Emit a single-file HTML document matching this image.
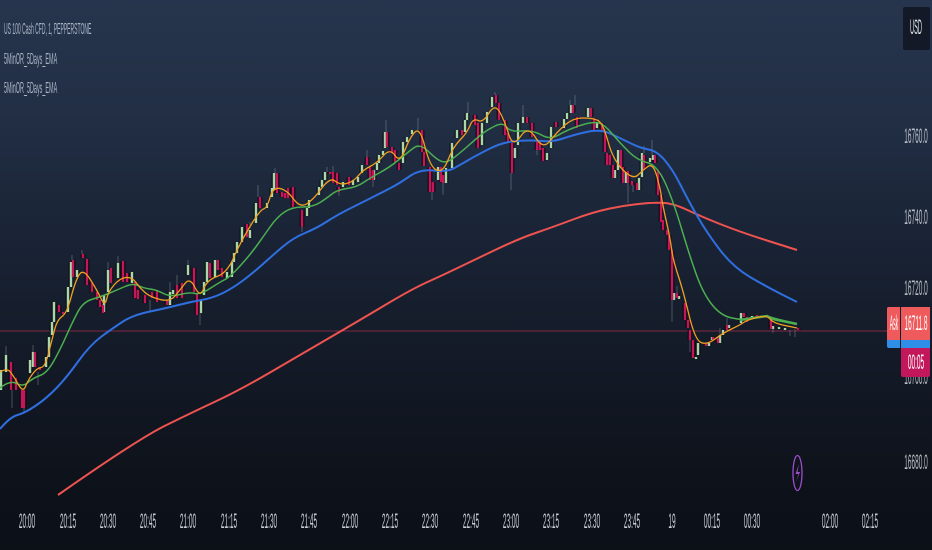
<!DOCTYPE html>
<html><head><meta charset="utf-8"><style>
html,body{margin:0;padding:0;background:#0d1119}
#c{position:relative;width:932px;height:550px;overflow:hidden;background:linear-gradient(#26354d 0,#222f45 20%,#1a2436 42%,#121824 70%,#0d1119 90%,#0c1017 100%);font-family:"Liberation Sans",sans-serif}
svg{position:absolute;left:0;top:0;filter:blur(.3px)}
.t{position:absolute;white-space:nowrap;line-height:20px;height:20px;transform-origin:center center;color:#c9cdd3;filter:blur(.3px)}
.x{font-size:21px;width:100px;text-align:center;transform:scaleX(.31);top:512px}
.y{font-size:21px;width:100px;text-align:center;left:866px;transform:scaleX(.31);color:#b9bec6}
.l{font-size:16px;left:4px;transform-origin:left center;transform:scaleX(.313);color:#aab6c6}
.b{position:absolute}
</style></head><body><div id="c">
<div class="t l" style="top:20px">US 100 Cash CFD, 1, PEPPERSTONE</div>
<div class="t l" style="top:50px;transform:scaleX(.34)">5MinOR_5Days_EMA</div>
<div class="t l" style="top:79px;transform:scaleX(.34)">5MinOR_5Days_EMA</div>

<div class="b" style="left:903px;top:7px;width:27px;height:43px;background:#131926;border-radius:2px"></div>
<div class="t y" style="left:866px;top:18px;color:#dfe3e8;transform:scaleX(.27)">USD</div>

<div class="t y" style="top:127px">16760.0</div>
<div class="t y" style="top:208px">16740.0</div>
<div class="t y" style="top:279px">16720.0</div>
<div class="t y" style="top:368px">16700.0</div>
<div class="t y" style="top:453px">16680.0</div>

<div class="t x" style="left:-23px">20:00</div>
<div class="t x" style="left:18px">20:15</div>
<div class="t x" style="left:58px">20:30</div>
<div class="t x" style="left:98px">20:45</div>
<div class="t x" style="left:138px">21:00</div>
<div class="t x" style="left:179px">21:15</div>
<div class="t x" style="left:219px">21:30</div>
<div class="t x" style="left:259px">21:45</div>
<div class="t x" style="left:300px">22:00</div>
<div class="t x" style="left:340px">22:15</div>
<div class="t x" style="left:380px">22:30</div>
<div class="t x" style="left:421px">22:45</div>
<div class="t x" style="left:461px">23:00</div>
<div class="t x" style="left:501px">23:15</div>
<div class="t x" style="left:542px">23:30</div>
<div class="t x" style="left:582px">23:45</div>
<div class="t x" style="left:622px">19</div>
<div class="t x" style="left:662px">00:15</div>
<div class="t x" style="left:702px">00:30</div>
<div class="t x" style="left:780px">02:00</div>
<div class="t x" style="left:820px">02:15</div>

<svg width="932" height="550" viewBox="0 0 932 550" fill="none">
<path d="M0 331H890" stroke="#a32a4c" stroke-opacity=".75" stroke-width="1"/>
<path stroke="#8d96a3" stroke-opacity=".45" stroke-width="1" d="M12 385V408M38 372V385M33 345V352M6 346V356M24 408V412M72 255V263M82 250V256M108 262V270M118 256V263M150 300V312M170 282V292M177 275V285M188 260V266M200 313V325M258 185V197M275 168V173M327 167V172M333 166V172M367 150V157M432 192V200M418 118V130M468 102V113M495 92V97M523 105V117M570 100V105M511 173V190M628 183V203M652 140V155M644 146V155M250 222V228M302 227V232M339 192V196M373 180V187M443 183V195M633 183V192M672 300V322M690 340V352M677 286V293M720 328V335M727 318V325M790 330V336M795 329V337M773 329V333M512 143V150M537 150V155M575 95V105M386 120V132"/>
<g stroke="#05070b" stroke-width="4.6">
<path d="M1 370V390M6 355V372M30 360V373M33 352V367M46 357V367M49 337V357M52 322V335M54 302V322M68 287V312M71 262V287M77 270V277M104 295V312M108 270V292M118 263V278M132 272V283M170 292V305M173 290V294M188 265V275M201 300V313M204 282V295M207 262V282M215 260V277M227 272V278M232 262V277M234 253V262M237 242V253M242 227V242M250 230V238M256 203V223M267 203V208M272 188V197M274 173V190M307 208V216M309 200V208M319 187V195M322 180V187M325 172V180M343 182V187M353 180V185M358 177V182M362 165V173M374 170V180M377 163V170M379 155V163M383 151V155M385 132V148M403 142V163M407 137V142M412 130V134M438 167V180M446 168V183M452 143V168M457 130V138M465 120V132M467 113V120M482 123V145M487 112V123M492 97V107M515 148V158M518 123V145M523 117V123M547 153V160M551 127V148M564 119V128M567 113V119M571 105V113M588 108V117M597 122V128M615 170V178M618 150V170M626 172V183M639 178V190M642 153V177M650 158V162M653 155V160M674 293V300M679 296V299M698 343V355M696 357V359M709 343V346M712 337V340M720 335V343M723 330V335M729 325V328M741 313V323M752 316V319M773 326V329M779 327V329M785 328V330"/>
<path d="M11 362V390M16 378V390M22 390V408M24 390V408M35 352V367M40 367V370M59 305V312M63 312V314M73 260V277M83 254V258M87 259V285M92 283V292M97 292V300M100 300V307M103 305V313M111 268V283M123 261V282M127 273V282M135 282V298M138 290V299M145 295V303M152 292V298M157 290V302M167 300V305M177 285V298M182 283V298M194 268V292M197 293V315M210 263V278M218 260V270M222 268V277M247 224V237M260 197V208M277 173V193M282 192V197M285 193V198M288 188V198M293 187V207M302 210V227M330 172V174M333 172V183M337 173V185M339 187V192M349 177V185M367 157V165M370 167V180M373 170V180M387 132V147M392 147V153M395 150V163M399 163V170M422 130V152M424 152V166M430 167V192M433 182V192M441 167V182M443 175V183M462 130V135M475 115V125M478 123V148M496 95V103M499 103V120M505 120V135M508 133V143M512 143V173M527 117V123M532 123V137M537 142V150M540 142V150M543 148V161M556 122V127M573 105V113M577 117V128M591 108V117M594 118V130M602 123V132M605 132V152M607 153V165M610 155V165M613 165V178M621 150V168M623 167V183M628 171V183M632 181V185M637 183V190M644 155V170M655 155V163M658 170V195M661 195V222M663 220V230M667 230V235M669 235V250M672 250V300M677 293V298M685 303V320M688 320V328M690 330V340M693 340V358M706 343V346M713 337V340M718 338V343M727 325V330M744 313V317M747 317V322M757 315V318M765 315V317M771 318V329M798 328V330"/>
</g>
<path stroke="#a9d6ab" stroke-width="2.5" d="M1 370V390M6 355V372M30 360V373M33 352V367M46 357V367M49 337V357M52 322V335M54 302V322M68 287V312M71 262V287M77 270V277M104 295V312M108 270V292M118 263V278M132 272V283M170 292V305M173 290V294M188 265V275M201 300V313M204 282V295M207 262V282M215 260V277M227 272V278M232 262V277M234 253V262M237 242V253M242 227V242M250 230V238M256 203V223M267 203V208M272 188V197M274 173V190M307 208V216M309 200V208M319 187V195M322 180V187M325 172V180M343 182V187M353 180V185M358 177V182M362 165V173M374 170V180M377 163V170M379 155V163M383 151V155M385 132V148M403 142V163M407 137V142M412 130V134M438 167V180M446 168V183M452 143V168M457 130V138M465 120V132M467 113V120M482 123V145M487 112V123M492 97V107M515 148V158M518 123V145M523 117V123M547 153V160M551 127V148M564 119V128M567 113V119M571 105V113M588 108V117M597 122V128M615 170V178M618 150V170M626 172V183M639 178V190M642 153V177M650 158V162M653 155V160M674 293V300M679 296V299M698 343V355M696 357V359M709 343V346M712 337V340M720 335V343M723 330V335M729 325V328M741 313V323M752 316V319M773 326V329M779 327V329M785 328V330"/>
<path stroke="#c2185b" stroke-width="2.5" d="M11 362V390M16 378V390M22 390V408M24 390V408M35 352V367M40 367V370M59 305V312M63 312V314M73 260V277M83 254V258M87 259V285M92 283V292M97 292V300M100 300V307M103 305V313M111 268V283M123 261V282M127 273V282M135 282V298M138 290V299M145 295V303M152 292V298M157 290V302M167 300V305M177 285V298M182 283V298M194 268V292M197 293V315M210 263V278M218 260V270M222 268V277M247 224V237M260 197V208M277 173V193M282 192V197M285 193V198M288 188V198M293 187V207M302 210V227M330 172V174M333 172V183M337 173V185M339 187V192M349 177V185M367 157V165M370 167V180M373 170V180M387 132V147M392 147V153M395 150V163M399 163V170M422 130V152M424 152V166M430 167V192M433 182V192M441 167V182M443 175V183M462 130V135M475 115V125M478 123V148M496 95V103M499 103V120M505 120V135M508 133V143M512 143V173M527 117V123M532 123V137M537 142V150M540 142V150M543 148V161M556 122V127M573 105V113M577 117V128M591 108V117M594 118V130M602 123V132M605 132V152M607 153V165M610 155V165M613 165V178M621 150V168M623 167V183M628 171V183M632 181V185M637 183V190M644 155V170M655 155V163M658 170V195M661 195V222M663 220V230M667 230V235M669 235V250M672 250V300M677 293V298M685 303V320M688 320V328M690 330V340M693 340V358M706 343V346M713 337V340M718 338V343M727 325V330M744 313V317M747 317V322M757 315V318M765 315V317M771 318V329M798 328V330"/>
<path class="s" stroke="#ef5350" stroke-width="2" stroke-linejoin="round" d="M58 495L138 439L193 412L240 390L300 355L360 320L412 289L443 275L470 262L518 239L553 227L593 212L627 205L660 202L677 205L700 216L740 232L797 250"/>
<path class="s" stroke="#2f6fe0" stroke-width="2" stroke-linejoin="round" d="M0 429L10 417L25 413L47 398L67 377L90 345L113 328L133 315L167 308L190 302L213 298L233 288L253 273L273 255L293 238L317 228L337 215L363 202L383 192L400 183L420 169L447 172L460 165L477 155L503 142L530 140L553 142L573 135L600 129L620 138L640 148L657 151L673 170L688 200L707 233L733 267L767 287L797 302"/>
<path class="s" stroke="#4caf50" stroke-width="1.5" stroke-linejoin="round" d="M0 388L10 380L23 387L33 378L47 373L60 350L72 323L83 302L100 297L117 290L133 283L143 288L157 290L170 297L190 292L200 295L220 282L230 277L250 255L263 237L277 217L292 207L313 207L327 198L337 190L357 187L370 178L390 167L407 153L420 143L437 160L447 163L460 153L477 138L487 130L503 122L510 132L533 130L550 140L567 130L590 122L603 123L620 143L637 160L657 165L673 200L690 257L703 293L720 315L740 320L753 318L767 316L773 318L797 324"/>
<path stroke="#4caf50" stroke-width="2.5" d="M740 320L753 318L767 316L773 319L797 324"/>
<path class="s" stroke="#f0a020" stroke-width="1.3" stroke-linejoin="round" d="M0 372L7 368L13 375L23 393L28 380L37 368L45 367L52 340L57 320L67 313L75 282L83 268L97 290L105 307L108 292L120 278L132 277L140 288L150 297L170 302L180 290L190 277L200 298L207 280L227 273L240 243L260 210L267 208L273 187L287 190L300 208L313 200L330 177L340 185L353 182L363 170L377 163L390 148L400 163L410 137L420 127L430 167L443 173L453 147L467 133L473 118L483 123L495 103L505 122L513 148L528 125L543 150L557 132L573 118L593 118L603 123L613 160L633 180L643 170L653 163L660 187L663 207L670 237L673 260L683 290L695 340L707 345L723 333L740 325L747 320L767 315L773 323L797 328"/>
<ellipse cx="797.5" cy="473" rx="4.5" ry="17.5" stroke="#9c4dcc" stroke-width="1.3"/>
<path d="M799 464L795.5 474H798.5L796 482L800 472H797.5Z" fill="#9c4dcc"/>
</svg>

<div class="b" style="left:887px;top:307px;width:13px;height:41px;background:#2f8fe8;border-radius:2px 0 0 2px"></div>
<div class="b" style="left:887px;top:307px;width:13px;height:33px;background:#ef5a5c;border-radius:2px 0 0 0"></div>
<div class="b" style="left:901px;top:307px;width:29px;height:41px;background:#2f8fe8"></div>
<div class="b" style="left:901px;top:307px;width:29px;height:33px;background:#ef5a5c"></div>
<div class="b" style="left:901px;top:348px;width:29px;height:29px;background:#c2185b;border-radius:0 0 2px 2px"></div>
<div class="t" style="left:843.5px;top:314px;width:100px;text-align:center;font-size:21px;transform:scaleX(.24);color:#fff">Ask</div>
<div class="t" style="left:866px;top:314px;width:100px;text-align:center;font-size:21px;transform:scaleX(.31);color:#fff">16711.8</div>
<div class="t" style="left:866px;top:353px;width:100px;text-align:center;font-size:21px;transform:scaleX(.31);color:#fff">00:05</div>
</div>
<script>
document.querySelectorAll('path.s').forEach(function(p){
  var n=p.getAttribute('d').match(/-?[\d.]+/g).map(Number),a=[];
  for(var i=0;i<n.length;i+=2)a.push([n[i],n[i+1]]);
  var d='M'+a[0][0]+' '+a[0][1];
  for(i=1;i<a.length-1;i++){
    var mx=(a[i][0]+a[i+1][0])/2,my=(a[i][1]+a[i+1][1])/2;
    d+='Q'+a[i][0]+' '+a[i][1]+' '+mx+' '+my;
  }
  d+='L'+a[a.length-1][0]+' '+a[a.length-1][1];
  p.setAttribute('d',d);
});
</script>
</body></html>
